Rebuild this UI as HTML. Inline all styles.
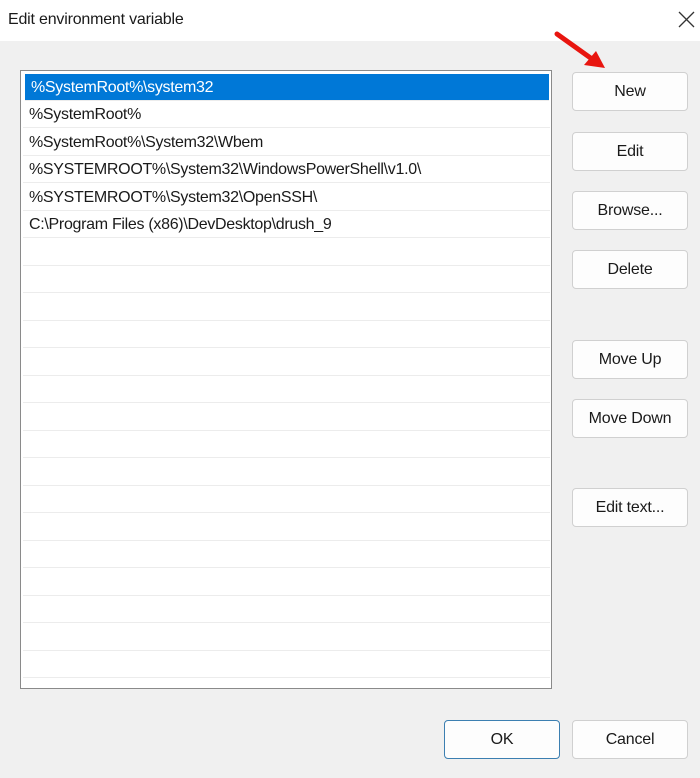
<!DOCTYPE html>
<html><head><style>
body{margin:0;width:700px;height:778px;background:#f0f0f0;font-family:"Liberation Sans",sans-serif;position:relative;overflow:hidden}
.title{position:absolute;left:0;top:0;width:700px;height:41px;background:#fff}
.title span{position:absolute;left:8px;top:11px;font-size:16px;color:#1a1a1a;letter-spacing:-0.2px}
.list{position:absolute;left:20px;top:70px;width:530px;height:617px;background:#fff;border:1px solid #8a8a8a}
.row{position:absolute;left:2px;width:527px;height:27px;border-bottom:1px solid #ececec;font-size:16px;line-height:27px;color:#1a1a1a;box-sizing:border-box;padding-left:6px;letter-spacing:-0.3px}
.sel{background:#0078d7;color:#fff;left:4px;width:524px}
.btn{position:absolute;width:114px;height:37px;background:#fdfdfd;border:1px solid #d0d0d0;border-radius:4px;font-size:16px;text-align:center;line-height:37px;color:#1a1a1a;letter-spacing:-0.2px}
</style></head><body>
<div class="title"><span>Edit environment variable</span></div>
<div class="list">
<div class="row sel" style="top:3px">%SystemRoot%\system32</div>
<div class="row" style="top:30px">%SystemRoot%</div>
<div class="row" style="top:57.5px">%SystemRoot%\System32\Wbem</div>
<div class="row" style="top:85px">%SYSTEMROOT%\System32\WindowsPowerShell\v1.0\</div>
<div class="row" style="top:112.5px">%SYSTEMROOT%\System32\OpenSSH\</div>
<div class="row" style="top:140px">C:\Program Files (x86)\DevDesktop\drush_9</div>
<div class="row" style="top:167.5px"></div><div class="row" style="top:195px"></div>
<div class="row" style="top:222.5px"></div><div class="row" style="top:250px"></div>
<div class="row" style="top:277.5px"></div><div class="row" style="top:305px"></div>
<div class="row" style="top:332.5px"></div><div class="row" style="top:360px"></div>
<div class="row" style="top:387.5px"></div><div class="row" style="top:415px"></div>
<div class="row" style="top:442.5px"></div><div class="row" style="top:470px"></div>
<div class="row" style="top:497.5px"></div><div class="row" style="top:525px"></div>
<div class="row" style="top:552.5px"></div><div class="row" style="top:580px"></div>
</div>
<div class="btn" style="left:572px;top:72px">New</div>
<div class="btn" style="left:572px;top:132px">Edit</div>
<div class="btn" style="left:572px;top:191px">Browse...</div>
<div class="btn" style="left:572px;top:250px">Delete</div>
<div class="btn" style="left:572px;top:340px">Move Up</div>
<div class="btn" style="left:572px;top:399px">Move Down</div>
<div class="btn" style="left:572px;top:488px">Edit text...</div>
<div class="btn" style="left:444px;top:720px;border-color:#3c7fb1">OK</div>
<div class="btn" style="left:572px;top:720px">Cancel</div>
<svg style="position:absolute;left:0;top:0" width="700" height="778">
<path d="M679 12 L694 27 M694 12 L679 27" stroke="#333" stroke-width="1.3"/>
<path d="M557 34 L592 59" stroke="#e8150f" stroke-width="5" stroke-linecap="round"/>
<path d="M605 68 L584 65 L596 51 Z" fill="#e8150f"/>
</svg>
</body></html>
